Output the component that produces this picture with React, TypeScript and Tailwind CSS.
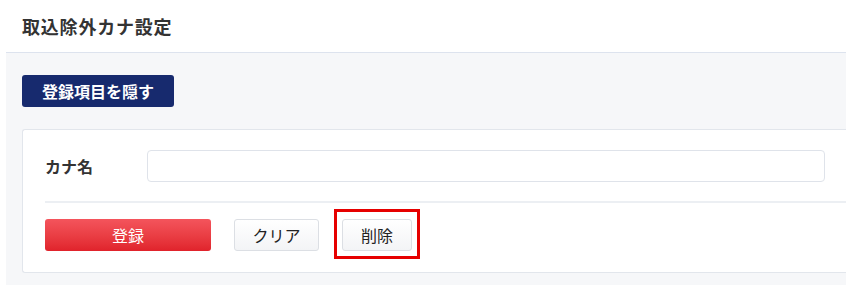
import React from 'react';

const jp = 'font-["Noto_Sans_CJK_JP","Noto_Sans",sans-serif]';

export default function App() {
  return (
    <div className={`w-[846px] h-[290px] bg-white overflow-hidden ${jp}`}>
      <div className="h-[52px] flex items-center px-[22px]">
        <h1 className="text-[18px] font-bold text-[#333] leading-none tracking-[0.8px]">取込除外カナ設定</h1>
      </div>

      <div className="ml-[6px] h-[233px] bg-[#f6f7f9] border-t border-[#dde3ee] pl-[16px] pt-[22px]">
        <button className="w-[152px] h-[32px] rounded-[3px] bg-[#172a6e] text-white text-[16px] font-bold leading-none">
          登録項目を隠す
        </button>

        <div className="mt-[22px] h-[144px] bg-white border border-r-0 border-[#e2e6ec] rounded-l-[3px] pl-[22px]">
          <div className="flex items-center h-[71px] pr-[21px]">
            <label className="w-[102px] text-[16px] font-semibold text-[#333]">カナ名</label>
            <input
              type="text"
              className="flex-1 h-[32px] rounded-[4px] border border-[#dfe3ea] bg-white outline-none px-2"
            />
          </div>
          <div className="border-t-2 border-[#eceff3]" />
          <div className="flex items-center gap-[23px] pt-[16px]">
            <button className="w-[166px] h-[32px] rounded-[3px] bg-gradient-to-b from-[#f4545c] to-[#e0222b] text-white text-[16px] leading-none">
              登録
            </button>
            <button className="w-[85px] h-[32px] rounded-[3px] border border-[#dcdfe4] bg-gradient-to-b from-white to-[#f3f4f6] text-[#222] text-[16px] leading-none">
              クリア
            </button>
            <div className="relative">
              <div className="absolute -top-[10px] -bottom-[8px] -left-[8px] -right-[8px] border-[3px] border-[#e60000]" />
              <button className="w-[70px] h-[32px] rounded-[3px] border border-[#dcdfe4] bg-gradient-to-b from-white to-[#f3f4f6] text-[#222] text-[16px] leading-none">
                削除
              </button>
            </div>
          </div>
        </div>
      </div>
    </div>
  );
}
